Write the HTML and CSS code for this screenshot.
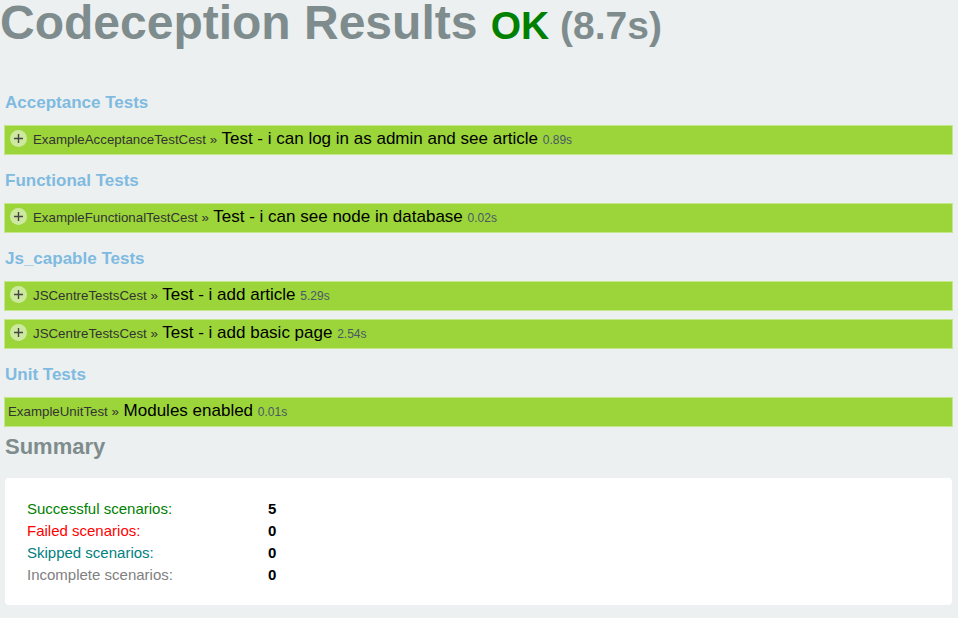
FILE: index.html
```
<!DOCTYPE html>
<html>
<head>
<meta charset="utf-8">
<title>Codeception Results</title>
<link rel="stylesheet" href="styles.css">
</head>
<body>
<h1 class="title">Codeception Results <span class="status"><span class="ok">OK</span> (8.7s)</span></h1>
<div class="content">
  <h3 class="suite">Acceptance Tests</h3>
  <div class="row"><span class="toggle"><svg width="17" height="17" viewBox="0 0 17 17"><path d="M8.5 4v9M4 8.5h9" stroke="#444" stroke-width="1.4"/></svg></span><span class="cls">ExampleAcceptanceTestCest &raquo;</span> <span class="name">Test - i can log in as admin and see article</span> <span class="time">0.89s</span></div>

  <h3 class="suite">Functional Tests</h3>
  <div class="row"><span class="toggle"><svg width="17" height="17" viewBox="0 0 17 17"><path d="M8.5 4v9M4 8.5h9" stroke="#444" stroke-width="1.4"/></svg></span><span class="cls">ExampleFunctionalTestCest &raquo;</span> <span class="name">Test - i can see node in database</span> <span class="time">0.02s</span></div>

  <h3 class="suite">Js_capable Tests</h3>
  <div class="row"><span class="toggle"><svg width="17" height="17" viewBox="0 0 17 17"><path d="M8.5 4v9M4 8.5h9" stroke="#444" stroke-width="1.4"/></svg></span><span class="cls">JSCentreTestsCest &raquo;</span> <span class="name">Test - i add article</span> <span class="time">5.29s</span></div>
  <div class="row"><span class="toggle"><svg width="17" height="17" viewBox="0 0 17 17"><path d="M8.5 4v9M4 8.5h9" stroke="#444" stroke-width="1.4"/></svg></span><span class="cls">JSCentreTestsCest &raquo;</span> <span class="name">Test - i add basic page</span> <span class="time">2.54s</span></div>

  <h3 class="suite">Unit Tests</h3>
  <div class="row row-plain"><span class="cls">ExampleUnitTest &raquo;</span> <span class="name">Modules enabled</span> <span class="time">0.01s</span></div>

  <h2 class="summary-title">Summary</h2>
  <div class="summary">
    <div class="label success">Successful scenarios:</div><div class="value">5</div>
    <div class="label failed">Failed scenarios:</div><div class="value">0</div>
    <div class="label skipped">Skipped scenarios:</div><div class="value">0</div>
    <div class="label incomplete">Incomplete scenarios:</div><div class="value">0</div>
  </div>
</div>
</body>
</html>
```
FILE: styles.css
```
html, body {
  margin: 0;
  padding: 0;
}
body {
  background: #ecf0f1;
  font-family: "Liberation Sans", Arial, Helvetica, sans-serif;
  width: 958px;
  height: 618px;
  overflow: hidden;
}
.title {
  margin: 0;
  padding-top: 2px;
  font-size: 48px;
  line-height: 41px;
  font-weight: bold;
  color: #7f8c8d;
  white-space: nowrap;
}
.status {
  font-size: 39px;
  line-height: 30px;
}
.ok {
  color: #008000;
}
.content {
  padding: 0 5px 0 4px;
  margin-top: 49px;
}
.suite {
  margin: 0 0 11px 1px;
  padding-top: 7px;
  font-size: 17px;
  line-height: 22px;
  font-weight: bold;
  color: #7fbae0;
}
.suite:first-child {
  padding-top: 0;
}
.row {
  height: 28px;
  line-height: 25px;
  font-size: 17px;
  background: #9bd53a;
  border: 1px solid #c4e78c;
  margin-bottom: 8px;
  padding-left: 5px;
  white-space: nowrap;
  overflow: hidden;
}
.row-plain {
  padding-left: 3px;
}
.toggle {
  display: inline-block;
  width: 17px;
  height: 17px;
  border-radius: 50%;
  background: #cde9a0;
  vertical-align: middle;
  margin-right: 6px;
  position: relative;
  top: -1px;
}
.toggle svg {
  display: block;
}
.cls {
  font-size: 13.3px;
  color: #333;
}
.name {
  color: #000;
}
.time {
  font-size: 12px;
  color: #4a5866;
}
.summary-title {
  margin: 0 0 19px 1px;
  font-size: 22px;
  line-height: 24px;
  font-weight: bold;
  color: #7f8c8d;
}
.summary {
  margin: 0 1px;
  background: #fff;
  border-radius: 4px;
  padding: 20px 22px 19px;
  display: grid;
  grid-template-columns: 241px auto;
  font-size: 15px;
  line-height: 22px;
}
.value {
  font-weight: bold;
  color: #000;
}
.success { color: #008000; }
.failed { color: #ff0000; }
.skipped { color: #008080; }
.incomplete { color: #808080; }
```
